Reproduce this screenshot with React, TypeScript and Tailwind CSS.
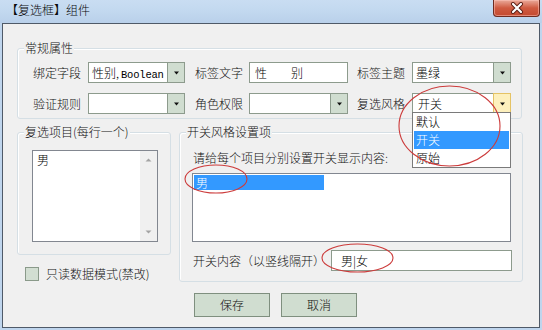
import React from "react";

function Arrow() {
  return (
    <svg width="7" height="4" viewBox="0 0 7 4">
      <path d="M1 0.5H6L3.5 3.5Z" fill="#111" />
    </svg>
  );
}

function Combo({
  className,
  children,
  yellow,
}: {
  className: string;
  children?: React.ReactNode;
  yellow?: boolean;
}) {
  return (
    <div className={"relative flex h-[21px] border border-[#8d9b8d] bg-white " + className}>
      <div className="flex-1 overflow-hidden whitespace-nowrap pl-[3px] leading-[19px]">{children}</div>
      {yellow ? (
        <div className="flex w-[18px] items-center justify-center border border-[#e5c365] bg-[#fdf0bd] -my-px -mr-px">
          <Arrow />
        </div>
      ) : (
        <div className="flex w-[17px] items-center justify-center border-l border-[#8d9b8d] bg-[#d0ddd0]">
          <Arrow />
        </div>
      )}
    </div>
  );
}

function Label({ children }: { children: React.ReactNode }) {
  return <div className="w-[48px] whitespace-nowrap leading-[16px] text-[#111]">{children}</div>;
}

function Group({
  title,
  className,
  children,
}: {
  title: string;
  className: string;
  children?: React.ReactNode;
}) {
  return (
    <div
      className={
        "relative rounded-[3px] border border-[#d5dfe5] shadow-[inset_1px_1px_0_#ffffff] " + className
      }
    >
      <span className="absolute left-[6px] top-[-9px] whitespace-nowrap bg-[#f0f0f0] px-[1px] leading-[16px] text-[#111]">
        {title}
      </span>
      {children}
    </div>
  );
}

export default function App() {
  return (
    <div className="relative h-[330px] w-[542px] overflow-hidden bg-[#bfd5ed] font-['Noto_Sans_CJK_SC',sans-serif] text-[12px] font-light text-black">
      {/* title bar */}
      <div className="flex h-[23px] bg-gradient-to-b from-[#c9ddf2] via-[#c2d8ef] to-[#b9d0ea]">
        <div className="pl-[6px] pt-[2px] leading-[16px] text-[#0a0a0a]">【复选框】组件</div>
        <div className="ml-auto mr-[2px] flex h-[17px] w-[47px] items-center justify-center rounded-b-[4px] border border-t-0 border-[#6e2b20] bg-gradient-to-b from-[#e9a99a] via-[#cf5a40] to-[#c44a30] shadow-[inset_0_0_0_1px_rgba(255,200,190,0.5)]">
          <svg width="14" height="12" viewBox="0 0 14 12">
            <path d="M3 2L11 10M11 2L3 10" stroke="#5a1d14" strokeWidth="4" strokeLinecap="round" />
            <path d="M3 2L11 10M11 2L3 10" stroke="#ffffff" strokeWidth="2.2" strokeLinecap="round" />
          </svg>
        </div>
      </div>

      {/* client area */}
      <div className="ml-[2px] h-[305px] w-[538px] border border-[#4f5a68] bg-[#f0f0f0]">
        {/* 常规属性 */}
        <Group title="常规属性" className="ml-[14px] mt-[24px] h-[71px] w-[505px] pt-[13px]">
          <div className="flex items-center pl-[15px]">
            <Label>绑定字段</Label>
            <Combo className="ml-[7px] w-[97px]">
              性别,
              <span className="ml-[2px] font-['Liberation_Mono',monospace] text-[10.5px] font-normal tracking-[-0.2px]">
                Boolean
              </span>
            </Combo>
            <div className="ml-[10px]">
              <Label>标签文字</Label>
            </div>
            <div className="ml-[6px] h-[21px] w-[99px] border border-[#8d9b8d] bg-white pl-[5px] leading-[19px]">
              性　　别
            </div>
            <div className="ml-[9px]">
              <Label>标签主题</Label>
            </div>
            <Combo className="ml-[7px] w-[99px]">墨绿</Combo>
          </div>
          <div className="mt-[10px] flex items-center pl-[15px]">
            <Label>验证规则</Label>
            <Combo className="ml-[7px] w-[97px]" />
            <div className="ml-[10px]">
              <Label>角色权限</Label>
            </div>
            <Combo className="ml-[6px] w-[99px]" />
            <div className="ml-[9px]">
              <Label>复选风格</Label>
            </div>
            <div className="relative ml-[7px]">
              <Combo className="w-[99px]" yellow>
                <span className="pl-[2px]">开关</span>
              </Combo>
              <div className="absolute left-0 top-[19px] z-10 w-[99px] border border-[#7a7a7a] bg-white py-[0px]">
                <div className="mx-[1px] h-[18px] pl-[2px] leading-[18px]">默认</div>
                <div className="mx-[1px] h-[18px] bg-[#3399ff] pl-[2px] leading-[18px] text-white">开关</div>
                <div className="mx-[1px] h-[18px] pl-[2px] leading-[18px]">原始</div>
              </div>
            </div>
          </div>
        </Group>

        {/* lower section */}
        <div className="ml-[14px] mt-[13px] flex items-start">
          <div className="w-[154px]">
            <Group title="复选项目(每行一个)" className="h-[123px] w-[154px] pl-[14px] pt-[17px]">
              <div className="flex h-[92px] w-[126px] border border-[#828790] bg-white">
                <div className="flex-1 pl-[4px] pt-[1px] leading-[16px]">男</div>
                <div className="flex w-[17px] flex-col items-center justify-between bg-[#f0f0f0] py-[7px]">
                  <svg width="7" height="4" viewBox="0 0 7 4">
                    <path d="M0.5 3.5L3.5 0.5L6.5 3.5Z" fill="#a3a3a3" />
                  </svg>
                  <svg width="7" height="4" viewBox="0 0 7 4">
                    <path d="M0.5 0.5L3.5 3.5L6.5 0.5Z" fill="#a3a3a3" />
                  </svg>
                </div>
              </div>
            </Group>
            <div className="ml-[8px] mt-[11px] flex items-center">
              <div className="h-[14px] w-[14px] border border-[#8a9a8a] bg-[#d2ded2]" />
              <div className="ml-[7px] whitespace-nowrap leading-[16px] text-[#111]">只读数据模式(禁改)</div>
            </div>
          </div>

          <Group title="开关风格设置项" className="ml-[8px] h-[150px] w-[344px] pt-[17px]">
            <div className="pl-[13px] leading-[16px] text-[#111]">请给每个项目分别设置开关显示内容:</div>
            <div className="ml-[12px] mt-[7px] h-[69px] w-[319px] border border-[#828790] bg-white p-px">
              <div className="h-[15px] w-[130px] bg-[#3399ff] pl-[2px] leading-[15px] text-white">男</div>
            </div>
            <div className="mt-[8px] flex items-center justify-between pl-[13px] pr-[10px]">
              <div className="whitespace-nowrap leading-[16px] text-[#111]">开关内容（以竖线隔开）</div>
              <div className="h-[21px] w-[181px] border border-[#8d9b8d] bg-white pl-[9px] leading-[19px]">
                男|女
              </div>
            </div>
          </Group>
        </div>

        {/* buttons */}
        <div className="ml-[191px] mt-[11px] flex gap-[11px]">
          <button className="h-[24px] w-[76px] border border-[#7f8f7f] bg-[#d0ddd0] leading-[22px] text-[#111]">
            保存
          </button>
          <button className="h-[24px] w-[76px] border border-[#7f8f7f] bg-[#d0ddd0] leading-[22px] text-[#111]">
            取消
          </button>
        </div>
      </div>

      {/* red annotation ellipses */}
      <svg className="pointer-events-none absolute left-0 top-0 z-20" width="542" height="330">
        <ellipse cx="449.5" cy="126" rx="50.5" ry="40" fill="none" stroke="#cc3b3b" strokeWidth="1.1" />
        <ellipse cx="216" cy="179" rx="31" ry="14" fill="none" stroke="#cc3b3b" strokeWidth="1.1" />
        <ellipse cx="357.5" cy="258" rx="35.5" ry="14" fill="none" stroke="#cc3b3b" strokeWidth="1.1" />
      </svg>
    </div>
  );
}
